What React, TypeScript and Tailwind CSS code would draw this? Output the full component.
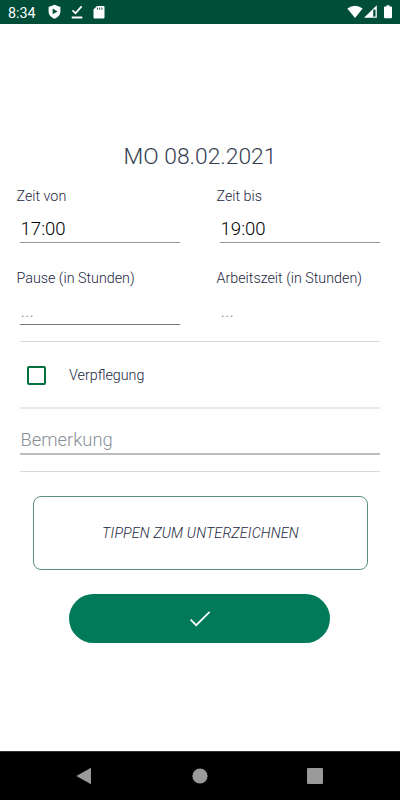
import { useState } from "react";

type FieldProps = {
  label: string;
  value?: string;
  placeholder?: string;
  readOnly?: boolean;
};

const Field = ({ label, value, placeholder, readOnly }: FieldProps) => (
  <label className="block h-[82px] w-1/2">
    <span className="block pl-[16.5px] text-[14.3px] leading-5 text-[#1c2740]">{label}</span>
    <input
      defaultValue={value}
      placeholder={placeholder}
      readOnly={readOnly}
      className={`ml-5 mt-[9px] block h-[28px] w-40 border-b pl-[0.5px] text-[18.6px] text-black outline-none placeholder:text-[#888c93] ${
        readOnly ? "border-transparent" : value ? "border-[#959595]" : "border-[#757575]"
      }`}
    />
  </label>
);

const StatusBar = () => (
  <div className="flex h-6 shrink-0 items-center bg-[#004d38] text-white">
    <span className="ml-2 w-[38px] pt-px text-[14.3px] font-normal leading-6">8:34</span>
    <svg className="ml-[2px]" width="13" height="16" viewBox="0 0 13 16" fill="none">
      <path d="M6.5 0.8 12.4 3v4.4c0 3.3-2.5 6-5.9 7.3C3.1 13.4 0.6 10.7 0.6 7.4V3z" fill="white" />
      <path d="M4.6 4.6v5.7L9.6 7.4z" fill="#004d38" />
    </svg>
    <svg className="ml-[10px]" width="12" height="16" viewBox="0 0 12 16" fill="none" stroke="white">
      <path d="M1.5 6.3 4.5 9.3 10.6 2.4" strokeWidth="1.8" />
      <path d="M0.7 13.5h10.6" strokeWidth="2" />
    </svg>
    <svg className="ml-[10px]" width="12" height="16" viewBox="0 0 12 16">
      <path d="M4 2h6.5q1 0 1 1v10.6q0 1-1 1h-9q-1 0-1-1V5.5z" fill="white" />
      <path d="M4.5 3.5v2.2M6.7 3.5v2.2M8.9 3.5v2.2" stroke="#004d38" strokeWidth="0.9" />
    </svg>
    <svg className="ml-auto" width="16" height="14" viewBox="0 0 16 14">
      <path d="M0.3 3.6Q8-2 15.7 3.6L8 12.9z" fill="white" />
    </svg>
    <svg className="ml-px" width="13" height="14" viewBox="0 0 13 14">
      <path d="M12.8 0.2V12.8H0z" fill="white" />
      <path d="M9.2 4.6h2.3v7H9.2z" fill="#004d38" />
    </svg>
    <svg className="ml-[7px] mr-2" width="8" height="14" viewBox="0 0 8 14">
      <path d="M2.5 0.3h3v1.3H7q1 0 1 1v9.7q0 1-1 1H1q-1 0-1-1V2.6q0-1 1-1h1.5z" fill="white" />
    </svg>
  </div>
);

const NavigationBar = () => (
  <div className="flex h-[49px] shrink-0 items-center justify-between border-t border-[#333] bg-black px-[76px] text-[#9a9a9a]">
    <svg width="17" height="18" viewBox="0 0 17 18" fill="currentColor">
      <path d="M15 0.8v16.4L0.3 9z" />
    </svg>
    <svg width="16" height="16" viewBox="0 0 16 16" fill="currentColor">
      <circle cx="8" cy="8" r="7.6" />
    </svg>
    <span className="mr-px size-4 rounded-[1px] bg-[#9a9a9a]" />
  </div>
);

const App = () => {
  const [meal, setMeal] = useState(false);

  return (
    <div className="flex h-[800px] w-[400px] flex-col overflow-hidden bg-white font-['Roboto',sans-serif] font-light">
      <StatusBar />
      <main className="flex-1 pt-[117px]">
        <h1 className="text-center text-[22.8px] leading-[31px] text-[#343c50]">MO 08.02.2021</h1>
        <div className="mt-[14px] flex flex-wrap">
          <Field label="Zeit von" value="17:00" />
          <Field label="Zeit bis" value="19:00" />
          <Field label="Pause (in Stunden)" placeholder="..." />
          <Field label="Arbeitszeit (in Stunden)" placeholder="..." readOnly />
        </div>
        <div className="mx-5 -mt-[9px] border-t border-[#d5d9da]">
          <label className="flex h-[65px] items-center pl-[7px] pt-px text-[14.3px] text-[#1c2740]">
            <input
              type="checkbox"
              checked={meal}
              onChange={() => setMeal(!meal)}
              className="mr-[23px] size-[19px] appearance-none rounded-[2px] border-2 border-[#00703c] checked:bg-[#00703c]"
            />
            <span className="pt-px">Verpflegung</span>
          </label>
        </div>
        <div className="mx-5 border-b border-t-2 border-b-[#d5d9da] border-t-[#e5eaed] pb-4 pt-4">
          <input
            placeholder="Bemerkung"
            className="block h-[30px] w-full border-b-2 border-[#bdbdbd] pl-[0.5px] pt-px text-[18.4px] outline-none placeholder:text-[#8a8f98]"
          />
        </div>
        <button className="ml-[33px] mt-6 block h-[74px] w-[335px] rounded-lg border border-[#5d917a] pt-[2px] text-[14.3px] italic tracking-[0.15px] text-[#1c2740]">
          TIPPEN ZUM UNTERZEICHNEN
        </button>
        <button className="ml-[69px] mt-6 flex h-[49px] w-[261px] items-center justify-center rounded-full bg-[#007a58]">
          <svg width="22" height="18" viewBox="0 0 22 18" fill="none" stroke="white" strokeWidth="1.7">
            <path d="M1.6 9.6 7.2 15.2 20.6 1.8" />
          </svg>
        </button>
      </main>
      <NavigationBar />
    </div>
  );
};

export default App;
